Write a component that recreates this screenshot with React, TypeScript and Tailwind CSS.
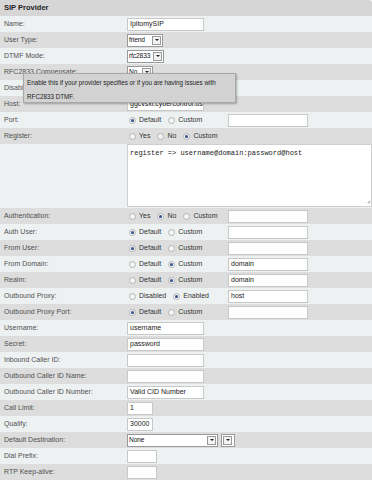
import React from "react";

const font = "font-['Liberation_Sans',Arial,sans-serif]";

function Radio({ checked, label }: { checked?: boolean; label: string }) {
  return (
    <span className="mr-[7px] flex items-center">
      <span className="flex h-[7px] w-[7px] items-center justify-center rounded-full border border-[#b4b4b4] bg-[#f4f4f4]">
        {checked && <span className="h-[3px] w-[3px] rounded-full bg-[#2f4f8a]" />}
      </span>
      <span className="ml-[3px] text-[#333]">{label}</span>
    </span>
  );
}

function Input({ value = "", w = "w-[77px]" }: { value?: string; w?: string }) {
  return (
    <span className={`flex h-[13px] items-center border border-[#c8c8c8] bg-white pl-[2px] text-[7px] text-[#222] ${w}`}>
      {value}
    </span>
  );
}

function Select({ value, w }: { value: string; w: string }) {
  return (
    <span className={`flex h-[13px] items-center justify-between border border-[#9a9a9a] bg-white pl-[1px] text-[#111] ${w}`}>
      <span className="text-[6.6px] tracking-[-0.1px]">{value}</span>
      <Arrow />
    </span>
  );
}

function Arrow() {
  return (
    <span className="mr-[1px] flex h-[9px] w-[9px] shrink-0 items-center justify-center border border-[#9a9a9a] bg-[#f2f2f2]">
      <span className="h-0 w-0 border-x-[2px] border-t-[2px] border-x-transparent border-t-[#222]" />
    </span>
  );
}

function Row({
  label,
  dark,
  children,
  h = "h-4",
}: {
  label: string;
  dark: boolean;
  children?: React.ReactNode;
  h?: string;
}) {
  return (
    <div className={`flex ${h} ${dark ? "bg-[#dddddd]" : "bg-[#eef1f2]"}`}>
      <div className="flex w-[127px] shrink-0 items-center pl-[4px] text-[#505050]">{label}</div>
      <div className="flex flex-1 items-center">{children}</div>
    </div>
  );
}

function RadioField({ opts, checked, value, show = true }: { opts: string[]; checked: number; value?: string; show?: boolean }) {
  return (
    <>
      <div className="flex w-[101px] items-center pl-[2px]">
        {opts.map((o, i) => (
          <Radio key={o} label={o} checked={i === checked} />
        ))}
      </div>
      {show && <Input value={value} w="w-[80px]" />}
    </>
  );
}

export default function App() {
  const rows: [string, React.ReactNode][] = [
    ["Name:", <Input value="IpitomySIP" />],
    ["User Type:", <Select value="friend" w="w-[36px]" />],
    ["DTMF Mode:", <Select value="rfc2833" w="w-[37px]" />],
    ["RFC2833 Compensate:", <Select value="No" w="w-[26px]" />],
    ["Disable Srtp:", null],
    ["Host:", <Input value="ggcvsxi.cybercontrol.us" />],
    ["Port:", <RadioField opts={["Default", "Custom"]} checked={0} />],
    ["Register:", <RadioField opts={["Yes", "No", "Custom"]} checked={2} show={false} />],
  ];
  const rows2: [string, React.ReactNode][] = [
    ["Authentication:", <RadioField opts={["Yes", "No", "Custom"]} checked={1} />],
    ["Auth User:", <RadioField opts={["Default", "Custom"]} checked={0} />],
    ["From User:", <RadioField opts={["Default", "Custom"]} checked={0} />],
    ["From Domain:", <RadioField opts={["Default", "Custom"]} checked={1} value="domain" />],
    ["Realm:", <RadioField opts={["Default", "Custom"]} checked={1} value="domain" />],
    ["Outbound Proxy:", <RadioField opts={["Disabled", "Enabled"]} checked={1} value="host" />],
    ["Outbound Proxy Port:", <RadioField opts={["Default", "Custom"]} checked={0} />],
    ["Username:", <Input value="username" />],
    ["Secret:", <Input value="password" />],
    ["Inbound Caller ID:", <Input />],
    ["Outbound Caller ID Name:", <Input />],
    ["Outbound Caller ID Number:", <Input value="Valid CID Number" />],
    ["Call Limit:", <Input value="1" w="w-[26px]" />],
    ["Qualify:", <Input value="30000" w="w-[26px]" />],
    [
      "Default Destination:",
      <div className="flex items-center gap-[3px]">
        <Select value="None" w="w-[91px]" />
        <span className="flex h-[13px] w-[14px] items-center justify-center border border-[#9a9a9a] bg-white">
          <Arrow />
        </span>
      </div>,
    ],
    ["Dial Prefix:", <Input w="w-[30px]" />],
    ["RTP Keep-alive:", <Input w="w-[30px]" />],
  ];

  return (
    <div className={`relative h-[480px] w-[372px] overflow-hidden bg-white text-[7px] ${font}`}>
      <div className="flex h-4 items-center rounded-tr-[3px] bg-[#d6d6d6] pl-[4px] text-[7.5px] font-bold text-[#222]">
        SIP Provider
      </div>
      {rows.map(([l, c], i) => (
        <Row key={l} label={l} dark={i % 2 === 1}>
          {c}
        </Row>
      ))}
      <Row label="" dark={false} h="h-16">
        <div className="relative h-[63px] w-full self-start border border-[#cfcfcf] bg-white pl-[2px] pt-[3px] font-['Liberation_Mono',monospace] text-[7px] text-[#222]">
          register =&gt; username@domain:password@host
          <span className="absolute bottom-[1px] right-[1px] text-[5px] leading-none text-[#bbb]">◢</span>
        </div>
      </Row>
      {rows2.map(([l, c], i) => (
        <Row key={l} label={l} dark={i % 2 === 0}>
          {c}
        </Row>
      ))}

      <div className="absolute left-[23px] top-[73px] h-[30px] w-[213px] border border-[#a8a8a8] bg-[#d2d2d2] px-[3px] pt-[5px] text-[6.3px] text-[#222] shadow-[1px_1px_2px_rgba(0,0,0,0.3)]">
        <div className="leading-[8px]">Enable this if your provider specifies or if you are having issues with</div>
        <div className="mt-[6px] leading-[8px]">RFC2833 DTMF.</div>
      </div>
    </div>
  );
}
